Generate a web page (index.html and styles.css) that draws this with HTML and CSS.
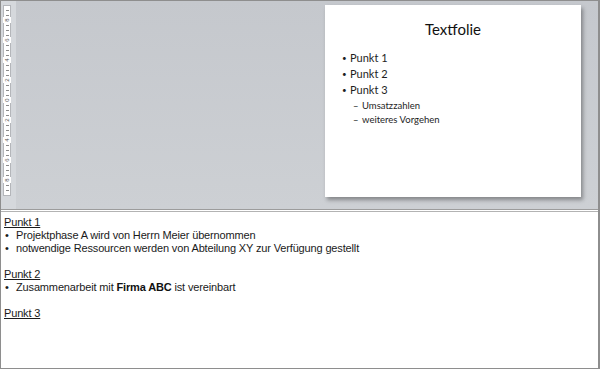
FILE: index.html
```html
<!DOCTYPE html>
<html lang="de">
<head>
<meta charset="utf-8">
<title>Textfolie</title>
<link rel="stylesheet" href="styles.css">
</head>
<body>
<div class="app">
  <div class="editor">
    <div class="ruler-col">
      <div class="ruler">
        <span class="num">8</span>
        <span class="num">6</span>
        <span class="num">4</span>
        <span class="num">2</span>
        <span class="num">0</span>
        <span class="num">2</span>
        <span class="num">4</span>
        <span class="num">6</span>
        <span class="num">8</span>
      </div>
    </div>
    <div class="canvas">
      <div class="slide">
        <div class="title">Textfolie</div>
        <ul class="list lvl1">
          <li><span class="b">•</span>Punkt 1</li>
          <li><span class="b">•</span>Punkt 2</li>
          <li><span class="b">•</span>Punkt 3</li>
        </ul>
        <ul class="list lvl2">
          <li><span class="d">–</span>Umsatzzahlen</li>
          <li><span class="d">–</span>weiteres Vorgehen</li>
        </ul>
      </div>
    </div>
  </div>
  <div class="sep"></div>
  <div class="notes">
    <div class="head">Punkt 1</div>
    <div class="bl"><span class="dot">•</span>Projektphase A wird von Herrn Meier übernommen</div>
    <div class="bl"><span class="dot">•</span>notwendige Ressourcen werden von Abteilung XY zur Verfügung gestellt</div>
    <div class="head gap">Punkt 2</div>
    <div class="bl"><span class="dot">•</span>Zusammenarbeit mit&nbsp;<strong>Firma ABC</strong>&nbsp;ist vereinbart</div>
    <div class="head gap">Punkt 3</div>
  </div>
</div>
</body>
</html>
```

FILE: styles.css
```css
* { box-sizing: border-box; }
html, body { margin: 0; padding: 0; background: #fff; }

.app {
  width: 600px;
  height: 369px;
  border: 1px solid #8e8e8e;
  border-right-width: 2px;
  display: flex;
  flex-direction: column;
  overflow: hidden;
}

.editor {
  height: 208px;
  display: flex;
  background: linear-gradient(to bottom, #c5c8cd, #cdd0d4);
}

.ruler-col {
  width: 15px;
  background: #d5d8dc;
  padding: 4px 0 0 2px;
}

.ruler {
  width: 8px;
  height: 191px;
  background-color: #fff;
  background-image: repeating-linear-gradient(to bottom, transparent 0 4px, #8a8a8a 4px 5px);
  background-size: 3px 100%;
  background-position: 2px 0;
  background-repeat: no-repeat;
  border: 1px solid #b4b6ba;
  display: flex;
  flex-direction: column;
  align-items: center;
  gap: 12px;
  padding-top: 10px;
}

.num {
  height: 8px;
  width: 6px;
  background: #fff;
  font: 6px/8px "Liberation Sans", sans-serif;
  color: #555;
  text-align: center;
  transform: rotate(-90deg);
}

.canvas {
  flex: 1;
  display: flex;
  justify-content: flex-end;
  align-items: flex-start;
  padding: 4px 17px 0 0;
}

.slide {
  width: 256px;
  height: 192px;
  background: #fff;
  box-shadow: 2px 3px 4px rgba(0, 0, 0, 0.35);
  font-family: Lato, "Open Sans", sans-serif;
  color: #1e1e1e;
  padding-top: 14px;
}

.title {
  text-align: center;
  font-size: 15px;
  line-height: 20px;
  color: #111;
}

.list { list-style: none; margin: 0; padding: 0; }

.list.lvl1 { margin-top: 11px; padding-left: 17px; }
.lvl1 li { font-size: 11px; line-height: 16px; display: flex; }
.lvl1 .b { width: 8px; font-size: 8px; }

.list.lvl2 { margin-top: 1px; padding-left: 28px; }
.lvl2 li { font-size: 9.5px; line-height: 14px; display: flex; }
.lvl2 .d { width: 9px; }

.sep {
  height: 3px;
  border-top: 1px solid #9c9c9c;
  border-bottom: 1px solid #b3b3b3;
  background: #fff;
}

.notes {
  flex: 1;
  background: #fff;
  padding: 4px 0 0 3px;
  font: 11px/13px "Liberation Sans", Arial, sans-serif;
  letter-spacing: -0.15px;
  color: #1a1a1a;
}

.head { text-decoration: underline; }
.head.gap { margin-top: 13px; }

.bl { display: flex; padding-left: 1px; white-space: nowrap; }
.bl .dot { width: 11px; }
.bl strong { font-weight: bold; color: #111; }
```
